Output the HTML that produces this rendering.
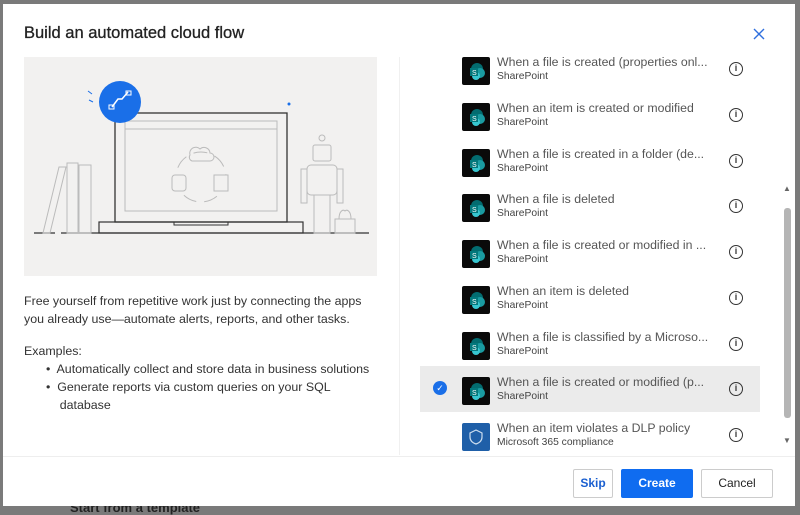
<!DOCTYPE html>
<html><head><meta charset="utf-8"><style>
*{margin:0;padding:0;box-sizing:border-box}
body{width:800px;height:513px;background:#7a7a7a;position:relative;overflow:hidden;font-family:"Liberation Sans",sans-serif}
.dlg{position:absolute;left:3px;top:4px;width:792px;height:502px;background:#fff}
.abs{position:absolute}
h1{position:absolute;left:21px;top:20px;font-size:16.5px;font-weight:normal;color:#222;-webkit-text-stroke:0.3px #222}
.ill{position:absolute;left:21px;top:53px;width:353px;height:219px;background:#f2f1f0}
.txt{position:absolute;left:21px;font-size:12.4px;color:#333;line-height:18px}
.row{position:absolute;left:417px;width:340px;height:45px}
.ic{position:absolute;left:42px;top:6px;width:28px;height:28px;background:#0a0a0a;border-radius:2px}
.t{position:absolute;left:77px;top:4px;font-size:12.3px;color:#555;white-space:nowrap}
.s{position:absolute;left:77px;top:20px;font-size:10.3px;color:#444}
.inf{position:absolute;left:309px;top:11px;width:14px;height:14px;border:1.3px solid #333;border-radius:50%;font-size:9px;text-align:center;line-height:11px;color:#333;font-weight:bold}
.btn{position:absolute;top:465px;height:29px;font-size:12px;text-align:center;line-height:27px;border:1px solid #ccc;border-radius:2px;font-weight:bold}
</style></head><body>
<div class="abs" style="left:70px;top:500px;font-size:13px;color:#222;font-weight:bold">Start from a template</div>
<div class="dlg">
<h1>Build an automated cloud flow</h1>
<svg class="abs" style="left:750px;top:24px" width="12" height="12"><path d="M1 1L11 11M11 1L1 11" stroke="#2f6fde" stroke-width="1.4"/></svg>
<div class="ill">
<svg width="353" height="219" viewBox="0 0 353 219" fill="none" stroke="#bbb" stroke-width="1">
<path d="M10 176H31M37 176H345" stroke="#333" stroke-width="1.2"/>
<path d="M19 176L35 110H42L26 176Z"/><rect x="43" y="106" width="11" height="70"/><rect x="55" y="108" width="12" height="68"/>
<rect x="91" y="56" width="172" height="109" stroke="#333" stroke-width="1.3"/>
<rect x="101" y="64" width="152" height="90"/>
<path d="M101 72H253"/>
<rect x="75" y="165" width="204" height="11" stroke="#333" stroke-width="1.2"/>
<rect x="150" y="165" width="54" height="3" stroke="#333"/>
<path d="M166 98a6 6 0 0 1 10-6a6 6 0 0 1 10 4a4 4 0 0 1 0 8h-18a4 4 0 0 1-2-6z"/>
<circle cx="177" cy="120" r="25" stroke-dasharray="14 8"/>
<rect x="148" y="118" width="14" height="16" rx="3" fill="#f2f1f0"/><rect x="190" y="118" width="14" height="16" fill="#f2f1f0"/>
<rect x="289" y="88" width="18" height="16" rx="2"/><circle cx="298" cy="81" r="3"/>
<rect x="283" y="108" width="30" height="30" rx="4"/><rect x="290" y="138" width="16" height="38"/>
<rect x="277" y="112" width="6" height="34"/><rect x="313" y="112" width="6" height="34"/>
<rect x="311" y="162" width="20" height="14"/><path d="M315 162c0-8 4-10 6-8c2-2 6 0 6 8"/>
<circle cx="96" cy="45" r="21" fill="#1a6fe8" stroke="none"/>
<path d="M88 50l6-8l4 0l6-7" stroke="#fff" stroke-width="1.5"/><rect x="85" y="48" width="5" height="4" stroke="#fff"/><rect x="102" y="34" width="5" height="4" stroke="#fff"/>
<path d="M65 43l4 2M64 34l4 3" stroke="#1a6fe8"/><circle cx="265" cy="47" r="1" fill="#1a6fe8" stroke="#1a6fe8"/>
</svg></div>
<div class="txt" style="top:288px">Free yourself from repetitive work just by connecting the apps<br>you already use—automate alerts, reports, and other tasks.</div>
<div class="txt" style="top:338px">Examples:</div>
<div class="txt" style="top:356px;left:43px">•&nbsp; Automatically collect and store data in business solutions<br>•&nbsp; Generate reports via custom queries on your SQL<br>&nbsp;&nbsp;&nbsp;&nbsp;database</div>
<div class="abs" style="left:396px;top:53px;width:1px;height:398px;background:#f0f0f0"></div>
<div class="abs" style="left:780px;top:180px;font-size:8px;color:#666">▲</div>
<div class="abs" style="left:780px;top:432px;font-size:8px;color:#666">▼</div>
<div class="abs" style="left:781px;top:204px;width:7px;height:210px;background:#b5b5b5;border-radius:3px"></div>
<div class="abs" style="left:417px;top:362px;width:340px;height:46px;background:#ebebeb"></div>
<div class="abs" style="left:430px;top:377px;width:14px;height:14px;border-radius:50%;background:#1a6fe8;color:#fff;font-size:9px;text-align:center;line-height:14px">✓</div>
<div id="rows"></div>
<div class="abs" style="left:0;top:452px;width:792px;height:1px;background:#eee"></div>
<div class="btn" style="left:570px;width:40px;color:#1a5fd0">Skip</div>
<div class="btn" style="left:618px;width:72px;background:#0f6cf0;color:#fff;border-color:#0f6cf0">Create</div>
<div class="btn" style="left:698px;width:72px;color:#222;font-weight:normal">Cancel</div>
</div>
<script>
var d=[["When a file is created (properties onl...","SharePoint"],["When an item is created or modified","SharePoint"],["When a file is created in a folder (de...","SharePoint"],["When a file is deleted","SharePoint"],["When a file is created or modified in ...","SharePoint"],["When an item is deleted","SharePoint"],["When a file is classified by a Microso...","SharePoint"],["When a file is created or modified (p...","SharePoint"],["When an item violates a DLP policy","Microsoft 365 compliance"]];
var h="";d.forEach(function(r,i){var top=47+i*45.75;var last=i==8;
h+='<div class="row" style="top:'+top+'px"><div class="ic" style="'+(last?'background:#1f5fa8':'')+'">'+(last?'<svg width="28" height="28"><path d="M14 7l6 3v4c0 4-3 6-6 7c-3-1-6-3-6-7v-4z" fill="none" stroke="#cde" stroke-width="1.2"/></svg>':'<svg width="28" height="28"><circle cx="15" cy="12" r="6" fill="#036c70"/><circle cx="18" cy="16" r="5" fill="#1a9ba1"/><circle cx="14" cy="19" r="4" fill="#37c6d0"/><rect x="8" y="11" width="8" height="8" fill="#03787c"/><text x="10" y="18" font-size="7" fill="#fff" font-family="Liberation Sans">S</text></svg>')+'</div><div class="t">'+r[0]+'</div><div class="s">'+r[1]+'</div><div class="inf">i</div></div>';});
document.getElementById("rows").innerHTML=h;
</script>
</body></html>
